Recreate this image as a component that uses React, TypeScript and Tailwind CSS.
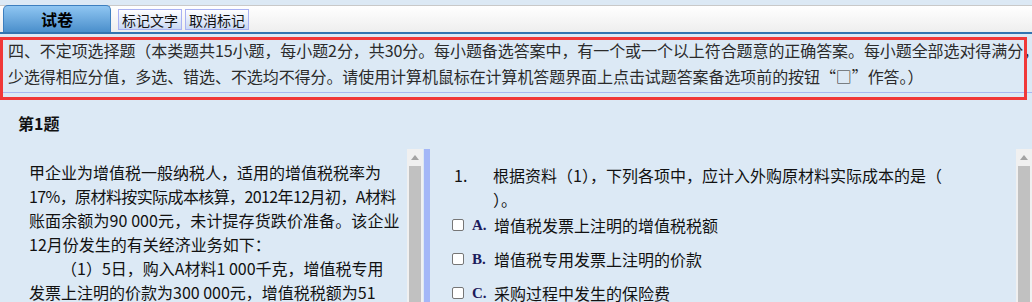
import React from 'react'

const cjk = "font-['Noto_Sans_CJK_SC','Noto_Sans',sans-serif]"

const materialLines = [
  { text: '甲企业为增值税一般纳税人，适用的增值税税率为', cls: '' },
  { text: '17%，原材料按实际成本核算，2012年12月初，A材料', cls: 'tracking-[-0.6px]' },
  { text: '账面余额为90 000元，未计提存货跌价准备。该企业', cls: 'tracking-[0.1px]' },
  { text: '12月份发生的有关经济业务如下：', cls: '' },
  { text: '（1）5日，购入A材料1 000千克，增值税专用', cls: 'pl-[32px]' },
  { text: '发票上注明的价款为300 000元，增值税税额为51', cls: '' },
]

const options = [
  { key: 'A', text: '增值税发票上注明的增值税税额' },
  { key: 'B', text: '增值税专用发票上注明的价款' },
  { key: 'C', text: '采购过程中发生的保险费' },
]

function ScrollBar() {
  return (
    <div className="w-[16px] h-full flex flex-col bg-[#f0f0f0] shrink-0">
      <div className="h-[17px] flex items-center justify-center">
        <svg width="8" height="5" viewBox="0 0 8 5">
          <path d="M4 0 L8 5 L0 5 Z" fill="#a3a3a3" />
        </svg>
      </div>
      <div className="flex-1 mx-[2px] bg-[#c1c1c1]"></div>
    </div>
  )
}

function ToolButton({ label }: { label: string }) {
  return (
    <div className="h-[21px] px-[3px] flex items-center border border-[#a9b1f2] bg-gradient-to-b from-[#ffffff] to-[#c9d8f3] text-[14px] text-[#111] leading-none">
      {label}
    </div>
  )
}

export default function App() {
  return (
    <div className={`relative w-[1032px] h-[302px] overflow-hidden bg-[#dce9f5] ${cjk}`}>
      <div className="h-[5px]"></div>
      {/* toolbar */}
      <div className="h-[27px] flex items-stretch border-t border-[#c9c9c9] bg-gradient-to-b from-[#ffffff] to-[#eeeeee]">
        <div className="ml-[3px] -mt-px w-[108px] rounded-t-[5px] border border-b-0 border-[#3d7fbf] bg-gradient-to-b from-[#8fc6f2] to-[#4a8fcb] flex items-center justify-center text-[16px] font-bold text-black">
          试卷
        </div>
        <div className="ml-[7px] flex items-center gap-[3px] pt-px">
          <ToolButton label="标记文字" />
          <ToolButton label="取消标记" />
        </div>
      </div>
      <div className="h-[2px] bg-[#3274b0]"></div>
      <div className="h-[3px]"></div>

      {/* instructions */}
      <div className="ml-[3px] pb-[3px] border-b border-[#a8b8f0]">
        <div className="pl-[5px] text-[16px] leading-[26px] text-[#2b2b2b] whitespace-nowrap tracking-[-0.08px]">
          <div>四、不定项选择题（本类题共15小题，每小题2分，共30分。每小题备选答案中，有一个或一个以上符合题意的正确答案。每小题全部选对得满分，</div>
          <div>少选得相应分值，多选、错选、不选均不得分。请使用计算机鼠标在计算机答题界面上点击试题答案备选项前的按钮“□”作答。）</div>
        </div>
      </div>

      <div className="mt-[18px] pl-[18px] h-[24px] leading-[24px] text-[16px] font-bold text-[#111]">第1题</div>

      {/* panels */}
      <div className="mt-[14px] h-[153px] flex">
        <div className="w-[407px] pl-[29px] pt-[11px] text-[16px] leading-[24px] text-[#111] whitespace-nowrap">
          {materialLines.map((l, i) => (
            <div key={i} className={l.cls}>{l.text}</div>
          ))}
        </div>
        <ScrollBar />
        <div className="ml-px w-[6px] h-full bg-[#a4b7f7]"></div>
        <div className="flex-1 pt-[14px] text-[16px] text-[#111] whitespace-nowrap">
          <div className="flex pl-[24px] leading-[24px]">
            <div className="w-[39px]">1.</div>
            <div>
              <div>根据资料（1），下列各项中，应计入外购原材料实际成本的是（</div>
              <div>）。</div>
            </div>
          </div>
          <div className="mt-[2px] flex flex-col gap-[10px] pl-[22px]">
            {options.map(o => (
              <div key={o.key} className="h-[24px] flex items-center">
                <span className="w-[12px] h-[12px] rounded-[2px] border border-[#767676] bg-white shrink-0"></span>
                <span className="ml-[8px] w-[22px] font-bold text-[15px] text-[#1c1c5c] font-['Liberation_Serif',serif]">{o.key}.</span>
                <span>{o.text}</span>
              </div>
            ))}
          </div>
        </div>
        <ScrollBar />
      </div>

      {/* red highlight annotation */}
      <div className="absolute left-0 top-[37px] w-[1027px] h-[63px] border-[3px] border-[#f03838] pointer-events-none"></div>
    </div>
  )
}
